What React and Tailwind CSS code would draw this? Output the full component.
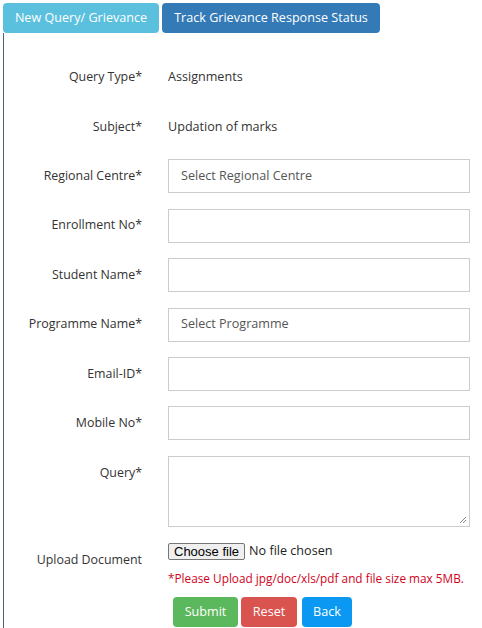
import React from "react";

const fields = [
  { label: "Regional Centre*", value: "Select Regional Centre" },
  { label: "Enrollment No*", value: "" },
  { label: "Student Name*", value: "" },
  { label: "Programme Name*", value: "Select Programme" },
  { label: "Email-ID*", value: "" },
  { label: "Mobile No*", value: "" },
];

const Label = ({ children }) => (
  <div className="w-[138px] shrink-0 text-right text-[12.4px] text-[#333]">{children}</div>
);

export default function App() {
  return (
    <div
      className="w-[482px] h-[628px] bg-white overflow-hidden"
      style={{ fontFamily: '"Open Sans", "Noto Sans", sans-serif' }}
    >
      <div className="flex gap-[3px] pl-[3px] pt-[3px]">
        <div className="w-[156px] h-[30px] rounded-[4px] bg-[#5bc0de] text-white text-[12.6px] flex items-center justify-center">
          New Query/ Grievance
        </div>
        <div className="w-[218px] h-[30px] rounded-[4px] bg-[#337ab7] text-white text-[12.6px] flex items-center justify-center">
          Track Grievance Response Status
        </div>
      </div>
      <div className="ml-[3px] border-l border-[#4f6178] pt-[27px] h-[600px] flex flex-col">
        <div className="flex items-center h-[34px]">
          <Label>Query Type*</Label>
          <div className="ml-[26px] text-[12.6px] text-[#333]">Assignments</div>
        </div>
        <div className="flex items-center h-[34px] mt-[16px]">
          <Label>Subject*</Label>
          <div className="ml-[26px] text-[12.6px] text-[#333]">Updation of marks</div>
        </div>
        {fields.map((f) => (
          <div key={f.label} className="flex items-center h-[34px] mt-[15.4px]">
            <Label>{f.label}</Label>
            <div className="ml-[26px] w-[302px] h-[34px] border border-[#ccc] flex items-center px-[12px] text-[12.6px] text-[#555]">
              {f.value}
            </div>
          </div>
        ))}
        <div className="flex items-start mt-[15.4px]">
          <div className="pt-[8px]">
            <Label>Query*</Label>
          </div>
          <div className="relative ml-[26px] w-[302px] h-[71px] border border-[#ccc]">
            <svg className="absolute right-[2px] bottom-[2px]" width="8" height="8" viewBox="0 0 8 8">
              <path d="M7 1 L1 7 M7 4 L4 7" stroke="#888" strokeWidth="1" />
            </svg>
          </div>
        </div>
        <div className="flex items-start mt-[16px]">
          <div className="pt-[8px]">
            <Label>Upload Document</Label>
          </div>
          <div className="ml-[26px] flex flex-col">
            <div className="flex items-center h-[17px]">
              <span
                className="h-[17px] px-[5px] bg-[#efefef] border border-[#767676] rounded-[2px] text-[13px] leading-[15px] text-black"
                style={{ fontFamily: '"Liberation Sans", Arial, sans-serif' }}
              >
                Choose file
              </span>
              <span className="ml-[4px] text-[12.6px] text-[#222]">No file chosen</span>
            </div>
            <div className="mt-[10px] text-[11.8px] text-[#d0021b]">
              *Please Upload jpg/doc/xls/pdf and file size max 5MB.
            </div>
            <div className="flex gap-[3px] mt-[10px] ml-[5px]">
              <div className="w-[65px] h-[30px] rounded-[4px] bg-[#5cb85c] text-white text-[12.6px] flex items-center justify-center">
                Submit
              </div>
              <div className="w-[56px] h-[30px] rounded-[4px] bg-[#d9534f] text-white text-[12.6px] flex items-center justify-center">
                Reset
              </div>
              <div className="w-[50px] h-[30px] rounded-[4px] bg-[#0a98f2] text-white text-[12.6px] flex items-center justify-center ml-[2px]">
                Back
              </div>
            </div>
          </div>
        </div>
      </div>
    </div>
  );
}
